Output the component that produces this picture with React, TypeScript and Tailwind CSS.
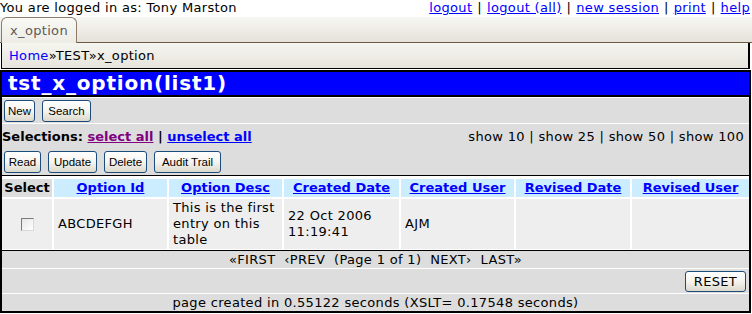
import React from 'react';

const topLinks = ['logout', 'logout (all)', 'new session', 'print', 'help'];

const columns = [
  { label: 'Select', link: false },
  { label: 'Option Id', link: true },
  { label: 'Option Desc', link: true },
  { label: 'Created Date', link: true },
  { label: 'Created User', link: true },
  { label: 'Revised Date', link: true },
  { label: 'Revised User', link: true },
];

const XpButton = ({ label, className = '' }: { label: string; className?: string }) => (
  <button
    className={`h-[22px] rounded-[3px] border border-[#1c4c7c] bg-linear-to-b from-white via-[#f5f4ef] to-[#dcd8cc] text-center font-['Liberation_Sans',Arial,sans-serif] text-[11.5px] leading-[20px] tracking-normal text-black ${className}`}
  >
    {label}
  </button>
);

const App = () => {
  return (
    <div className="h-[314px] w-[752px] overflow-hidden bg-white font-['DejaVu_Sans',Verdana,sans-serif] text-[13px] tracking-[0.025em] text-black">
      {/* logged in bar */}
      <div className="flex h-[17px] items-start justify-between pr-[2px] leading-[16px]">
        <span>You are logged in as: Tony Marston</span>
        <span>
          {topLinks.map((l, i) => (
            <React.Fragment key={l}>
              {i > 0 && <span className="px-[5px]">|</span>}
              <a className="text-[#0000ff] underline">{l}</a>
            </React.Fragment>
          ))}
        </span>
      </div>

      {/* tabs */}
      <div className="flex h-[26px] items-end border-b border-[#6b5a47] bg-linear-to-b from-[#f7f7f3] to-[#e5e2d9]">
        <div className="-mb-px ml-px flex h-[26px] w-[76px] items-center justify-center rounded-t-[6px] border border-b-0 border-[#8c7c69] bg-linear-to-b from-[#f9f9f6] to-[#ecebe4] text-[#5e5a55]">
          x_option
        </div>
      </div>

      {/* breadcrumb */}
      <div className="ml-px flex h-[26px] w-[749px] items-center border-r-2 border-b border-l border-black bg-linear-to-b from-[#f6f6f1] to-[#e6e4dc] pl-[7px]">
        <a className="text-[#0000ff]">Home</a>»TEST»x_option
      </div>

      {/* main panel */}
      <div className="mt-px w-[751px] border-x-2 border-b-2 border-black bg-[#dddddd]">
        <div className="flex h-[27px] items-center border-y-2 border-black bg-[#0000ff] pl-[6px] text-[20px] font-bold leading-[23px] tracking-[0.04em] text-white">
          tst_x_option(list1)
        </div>
        <div className="h-px bg-white" />
        <div className="flex h-[25px] gap-[7px] pl-[2px] pt-[2px]">
          <XpButton label="New" className="w-[31px]" />
          <XpButton label="Search" className="w-[49px]" />
        </div>
        <div className="h-px bg-white" />
        <div className="flex h-[25px] items-center justify-between pr-[5px]">
          <div className="font-bold tracking-normal">
            Selections: <a className="text-[#800080] underline">select all</a> |{' '}
            <a className="text-[#0000ff] underline">unselect all</a>
          </div>
          <div>show 10 | show 25 | show 50 | show 100</div>
        </div>
        <div className="flex h-[26px] gap-[7px] pl-[2px] pt-[2px]">
          <XpButton label="Read" className="w-[37px]" />
          <XpButton label="Update" className="w-[49px]" />
          <XpButton label="Delete" className="w-[43px]" />
          <XpButton label="Audit Trail" className="w-[67px]" />
        </div>
        <div className="h-px bg-black" />

        {/* list table */}
        <div className="grid grid-cols-[50px_113px_113px_115px_113px_114px_1fr] gap-[2px] bg-white pb-px pt-[3px]">
          {columns.map((c) => (
            <div
              key={c.label}
              className={`flex h-[18px] items-center justify-center font-bold leading-[16px] tracking-normal ${c.link ? 'bg-[#ccecff] text-[#0000ff] underline' : 'bg-[#dddddd]'}`}
            >
              {c.label}
            </div>
          ))}
          <div className="flex h-[50px] items-center justify-center bg-[#eeeeee]">
            <div className="h-[13px] w-[13px] border border-t-[#7a7a7a] border-l-[#7a7a7a] border-r-[#d8d8d8] border-b-[#d8d8d8] bg-linear-to-br from-[#e6e6e6] to-white" />
          </div>
          <div className="flex items-center bg-[#eeeeee] px-[4px] leading-[16px]">ABCDEFGH</div>
          <div className="flex items-center bg-[#eeeeee] px-[4px] leading-[16px]">This is the first entry on this table</div>
          <div className="flex items-center bg-[#eeeeee] px-[4px] leading-[16px]">22 Oct 2006 11:19:41</div>
          <div className="flex items-center bg-[#eeeeee] px-[4px] leading-[16px]">AJM</div>
          <div className="bg-[#eeeeee]" />
          <div className="bg-[#eeeeee]" />
        </div>
        <div className="h-px bg-black" />

        {/* pagination */}
        <div className="flex h-[17px] items-center justify-center whitespace-pre leading-[16px]">
          {'«FIRST  ‹PREV  (Page 1 of 1)  NEXT›  LAST»'}
        </div>
        <div className="h-px bg-white" />
        <div className="flex h-[24px] items-center justify-end pr-[3px]">
          <button className="h-[21px] w-[61px] rounded-[3px] border border-[#1c4c7c] bg-linear-to-b from-white via-[#f5f4ef] to-[#dcd8cc] text-[13px] leading-[19px]">
            RESET
          </button>
        </div>
        <div className="h-px bg-white" />
        <div className="flex h-[17px] items-center justify-center leading-[16px]">
          page created in 0.55122 seconds (XSLT= 0.17548 seconds)
        </div>
      </div>
    </div>
  );
};

export default App;
